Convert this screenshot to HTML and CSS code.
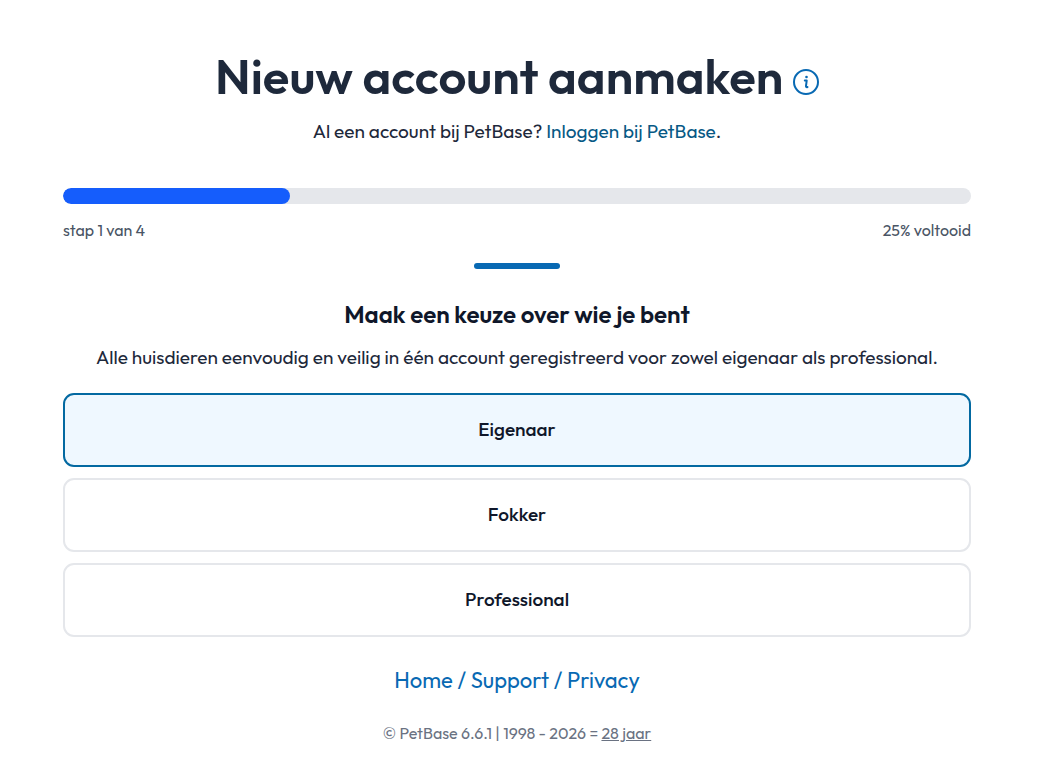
FILE: index.html
```
<!DOCTYPE html>
<html lang="nl">

<head>
  <meta charset="UTF-8" />
  <meta name="viewport" content="width=device-width, initial-scale=1.0" />
  <title>Nieuw account aanmaken</title>
  <link rel="stylesheet" href="styles.css">
</head>

<body>
  <main class="page">
    <header class="header">
      <h1 class="title">Nieuw account aanmaken
        <button class="info" type="button" aria-label="Informatie">
          <svg viewBox="0 0 26 26" width="26" height="26" fill="none" stroke="currentColor" stroke-width="2" stroke-linecap="round" stroke-linejoin="round">
            <circle cx="13" cy="13" r="12" />
            <path d="M11.8 11.6h1.9l-.7 5.2q-.2 1.8 1.5 1.2" />
            <circle cx="13.5" cy="8" r="1.3" fill="currentColor" stroke="none" />
          </svg>
        </button>
      </h1>
      <p class="text">Al een account bij PetBase? <a class="login" href="#">Inloggen bij PetBase</a>.</p>
    </header>

    <div class="progress" role="progressbar" aria-label="Voortgang" aria-valuenow="25" aria-valuemin="0" aria-valuemax="100">
      <div class="progress-bar" style="width: 25%"></div>
    </div>
    <div class="steps">
      <span>stap 1 van 4</span>
      <span>25% voltooid</span>
    </div>

    <hr class="divider">

    <h2 class="subtitle" id="choice-title">Maak een keuze over wie je bent</h2>
    <p class="text">Alle huisdieren eenvoudig en veilig in één account geregistreerd voor zowel eigenaar als professional.</p>

    <form class="choices" role="radiogroup" aria-labelledby="choice-title">
      <label class="choice" for="owner">
        <input type="radio" id="owner" name="role" value="owner" checked>
        <span>Eigenaar</span>
      </label>
      <label class="choice" for="breeder">
        <input type="radio" id="breeder" name="role" value="breeder">
        <span>Fokker</span>
      </label>
      <label class="choice" for="professional">
        <input type="radio" id="professional" name="role" value="professional">
        <span>Professional</span>
      </label>
    </form>

    <footer class="footer">
      <nav class="links">
        <a href="#">Home</a> / <a href="#">Support</a> / <a href="#">Privacy</a>
      </nav>
      <p class="copyright">© PetBase 6.6.1 | 1998 - 2026 = <u>28 jaar</u></p>
    </footer>
  </main>
</body>

</html>
```
FILE: styles.css
```
* {
  box-sizing: border-box;
}

body {
  margin: 0;
  background-color: #fff;
  color: #1e293b;
  font-family: Outfit, Lato, sans-serif;
  font-size: 19px;
  line-height: 26px;
}

h1,
h2,
p {
  margin: 0;
}

a {
  color: inherit;
  text-decoration: none;
}

.page {
  padding: 46px 77px 24px 63px;
  text-align: center;
}

.title {
  color: #1e293b;
  font-size: 49px;
  font-weight: 600;
  line-height: 60px;
}

.info {
  width: 26px;
  height: 26px;
  margin: 0;
  padding: 0;
  border: 0;
  background: none;
  color: #0869b3;
  line-height: 0;
  vertical-align: -1px;
  cursor: pointer;
}

.header .text {
  margin-top: 12px;
}

.login {
  color: #075985;
}

.progress {
  height: 16px;
  margin-top: 44px;
  overflow: hidden;
  border-radius: 8px;
  background-color: #e5e7eb;
}

.progress-bar {
  height: 100%;
  border-radius: 8px;
  background-color: #155dfc;
}

.steps {
  display: flex;
  justify-content: space-between;
  margin-top: 13px;
  color: #4a5565;
  font-size: 16px;
}

.divider {
  width: 86px;
  height: 6px;
  margin: 20px auto 0;
  border: 0;
  border-radius: 3px;
  background-color: #0869b3;
}

.subtitle {
  margin: 29px 0 14px;
  color: #0f172a;
  font-size: 24px;
  font-weight: 600;
  line-height: 32px;
}

.choices {
  display: grid;
  gap: 11px;
  margin-top: 23px;
}

.choice {
  display: flex;
  align-items: center;
  justify-content: center;
  position: relative;
  padding: 21px 22px 23px;
  border: 2px solid #e5e7eb;
  border-radius: 11px;
  color: #0f172a;
  font-weight: 500;
  cursor: pointer;
}

.choice input {
  appearance: none;
  position: absolute;
  inset: 0;
  margin: 0;
  border-radius: inherit;
  cursor: pointer;
}

.choice:has(input:checked) {
  border-color: #0369a1;
  background-color: #eff8ff;
}

.footer {
  margin-top: 27px;
}

.links {
  color: #0869b3;
  font-size: 22px;
  line-height: 32px;
}

.copyright {
  margin-top: 24px;
  color: #6a7282;
  font-size: 16px;
}
```
